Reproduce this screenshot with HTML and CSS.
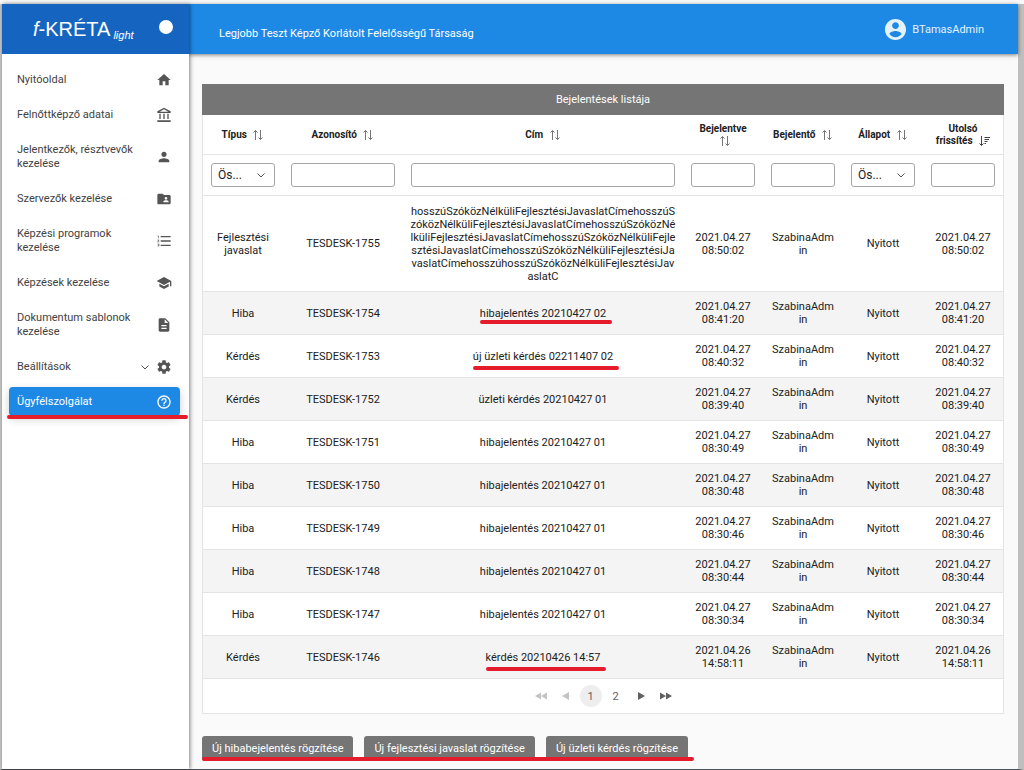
FILE: index.html
```html
<!DOCTYPE html>
<html lang="hu">
<head>
    <meta charset="UTF-8">
    <meta name="viewport" content="width=device-width, initial-scale=1.0">
    <title>f-KRÉTA light - Ügyfélszolgálat</title>
    <link rel="stylesheet" href="styles.css">
</head>
<body>
    <svg class="sprite" aria-hidden="true">
        <symbol id="sort" viewBox="0 0 12 12">
            <path d="M3.500 11V1.500M1.500 3.500l2-2 2 2M8.500 1v9.500M6.500 8.500l2 2 2-2" fill="none" stroke="currentColor"/>
        </symbol>
        <symbol id="sort-down" viewBox="0 0 12 12">
            <path d="M3.500 1v9.500M1.500 8.500l2 2 2-2M6.500 2.500H12M6.500 4.500H11M6.500 6.500h3M6.500 8.500h1.500" fill="none" stroke="currentColor"/>
        </symbol>
    </svg>

    <div class="app">
        <aside class="sidebar">
            <div class="brand">
                <div class="logo"><span><i>f</i>-KRÉTA</span><em>light</em></div>
                <span class="dot"></span>
            </div>
            <nav class="menu">
                <a href="#">
                    <span>Nyitóoldal</span>
                    <svg viewBox="0 0 24 24"><path d="M10 20v-6h4v6h5v-8h3L12 3 2 12h3v8z"/></svg>
                </a>
                <a href="#">
                    <span>Felnőttképző adatai</span>
                    <svg viewBox="0 0 24 24"><path d="M5 10h2v8H5zM11 10h2v8h-2zM17 10h2v8h-2zM2 20h20v2.500H2zM12 1L2 6.500V9h20V6.500zM12 3.300L18.500 7h-13z" fill-rule="evenodd"/></svg>
                </a>
                <a href="#">
                    <span>Jelentkezők, résztvevők kezelése</span>
                    <svg viewBox="0 0 24 24"><path d="M12 12c2.210 0 4-1.790 4-4s-1.790-4-4-4-4 1.790-4 4 1.790 4 4 4zm0 2c-2.670 0-8 1.340-8 4v2h16v-2c0-2.660-5.330-4-8-4z"/></svg>
                </a>
                <a href="#">
                    <span>Szervezők kezelése</span>
                    <svg viewBox="0 0 24 24"><path d="M20 6h-8l-2-2H4C2.900 4 2 4.900 2 6v12c0 1.100.9 2 2 2h16c1.100 0 2-.9 2-2V8c0-1.100-.9-2-2-2zm-5 3c1.100 0 2 .9 2 2s-.9 2-2 2-2-.9-2-2 .9-2 2-2zm4 8h-8v-1c0-1.330 2.670-2 4-2s4 .67 4 2v1z"/></svg>
                </a>
                <a href="#">
                    <span>Képzési programok kezelése</span>
                    <svg viewBox="0 0 24 24"><path d="M2 17h2v.5H3v1h1v.5H2v1h3v-4H2zM3 8h1V4H2v1h1zM2 11h1.800L2 13.100v.9h3v-1H3.200L5 10.900V10H2zM7 4.500v2h15v-2zM7 19.500h15v-2H7zM7 13h15v-2H7z"/></svg>
                </a>
                <a href="#">
                    <span>Képzések kezelése</span>
                    <svg viewBox="0 0 24 24"><path d="M5 13.180v4L12 21l7-3.820v-4L12 17zM12 3L1 9l11 6 9-4.910V17h2V9z"/></svg>
                </a>
                <a href="#">
                    <span>Dokumentum sablonok kezelése</span>
                    <svg viewBox="0 0 24 24"><path d="M14 2H6c-1.100 0-2 .9-2 2v16c0 1.100.9 2 2 2h12c1.100 0 2-.9 2-2V8zm2 16H8v-2h8zm0-4H8v-2h8zm-3-5V3.500L18.500 9z"/></svg>
                </a>
                <a href="#">
                    <span>Beállítások</span>
                    <svg class="chevron" viewBox="0 0 10 10"><path d="M1.500 3.500L5 7l3.500-3.500"/></svg>
                    <svg viewBox="0 0 24 24"><path d="M19.430 12.980c.04-.32.07-.64.07-.98s-.03-.66-.07-.98l2.110-1.650c.19-.15.24-.42.12-.64l-2-3.460c-.12-.22-.39-.3-.61-.22l-2.490 1c-.52-.4-1.080-.73-1.690-.98l-.38-2.650C14.460 2.180 14.250 2 14 2h-4c-.25 0-.46.18-.49.42l-.38 2.650c-.61.25-1.170.59-1.690.98l-2.490-1c-.23-.09-.49 0-.61.22l-2 3.460c-.13.22-.07.49.12.64l2.110 1.650c-.04.32-.07.65-.07.98s.03.66.07.98l-2.110 1.650c-.19.15-.24.42-.12.64l2 3.460c.12.22.39.3.61.22l2.490-1c.52.4 1.080.73 1.690.98l.38 2.650c.03.24.24.42.49.42h4c.25 0 .46-.18.49-.42l.38-2.650c.61-.25 1.170-.59 1.690-.98l2.490 1c.23.09.49 0 .61-.22l2-3.460c.12-.22.07-.49-.12-.64zM12 15.500c-1.930 0-3.500-1.570-3.500-3.500s1.570-3.500 3.500-3.500 3.500 1.570 3.500 3.500-1.570 3.500-3.500 3.500z"/></svg>
                </a>
                <a href="#" class="active mark">
                    <span>Ügyfélszolgálat</span>
                    <svg viewBox="0 0 24 24"><path d="M11 18h2v-2h-2zM12 2C6.480 2 2 6.480 2 12s4.480 10 10 10 10-4.480 10-10S17.520 2 12 2zm0 18c-4.410 0-8-3.590-8-8s3.590-8 8-8 8 3.590 8 8-3.590 8-8 8zm0-14c-2.210 0-4 1.790-4 4h2c0-1.100.9-2 2-2s2 .9 2 2c0 2-3 1.750-3 5h2c0-2.250 3-2.500 3-5 0-2.210-1.790-4-4-4z"/></svg>
                </a>
            </nav>
        </aside>

        <div class="page">
            <header class="topbar">
                <span>Legjobb Teszt Képző Korlátolt Felelősségű Társaság</span>
                <a href="#" class="user">
                    <svg viewBox="0 0 24 24"><path d="M12 1C5.900 1 1 5.900 1 12s4.900 11 11 11 11-4.900 11-11S18.100 1 12 1zm0 3.500c1.900 0 3.500 1.600 3.500 3.500s-1.600 3.500-3.500 3.500S8.500 9.900 8.500 8s1.600-3.500 3.500-3.500zM12 20c-2.700 0-5-1.300-6.300-3.300.1-2 4.200-3.100 6.300-3.100s6.200 1.100 6.300 3.100C17 18.700 14.700 20 12 20z"/></svg>
                    <span>BTamasAdmin</span>
                </a>
            </header>

            <main class="content">
                <section class="panel">
                    <h1>Bejelentések listája</h1>
                    <table>
                        <colgroup>
                            <col class="narrow"><col class="medium"><col class="wide">
                            <col class="narrow"><col class="narrow"><col class="narrow"><col class="narrow">
                        </colgroup>
                        <thead>
                            <tr>
                                <th>Típus <svg><use href="#sort"/></svg></th>
                                <th>Azonosító <svg><use href="#sort"/></svg></th>
                                <th>Cím <svg><use href="#sort"/></svg></th>
                                <th>Bejelentve <svg><use href="#sort"/></svg></th>
                                <th>Bejelentő <svg><use href="#sort"/></svg></th>
                                <th>Állapot <svg><use href="#sort"/></svg></th>
                                <th>Utolsó frissítés <svg class="sorted"><use href="#sort-down"/></svg></th>
                            </tr>
                            <tr class="filters">
                                <td><select aria-label="Típus"><option>Ös...</option></select></td>
                                <td><input type="text" aria-label="Azonosító"></td>
                                <td><input type="text" aria-label="Cím"></td>
                                <td><input type="text" aria-label="Bejelentve"></td>
                                <td><input type="text" aria-label="Bejelentő"></td>
                                <td><select aria-label="Állapot"><option>Ös...</option></select></td>
                                <td><input type="text" aria-label="Utolsó frissítés"></td>
                            </tr>
                        </thead>
                        <tbody>
                            <tr>
                                <td>Fejlesztési javaslat</td>
                                <td>TESDESK-1755</td>
                                <td class="break">hosszúSzóközNélküliFejlesztésiJavaslatCímehosszúSzóközNélküliFejlesztésiJavaslatCímehosszúSzóközNélküliFejlesztésiJavaslatCímehosszúSzóközNélküliFejlesztésiJavaslatCímehosszúSzóközNélküliFejlesztésiJavaslatCímehosszúhosszúSzóközNélküliFejlesztésiJavaslatC</td>
                                <td>2021.04.27 08:50:02</td>
                                <td>SzabinaAdmin</td>
                                <td>Nyitott</td>
                                <td>2021.04.27 08:50:02</td>
                            </tr>
                            <tr>
                                <td>Hiba</td>
                                <td>TESDESK-1754</td>
                                <td><span class="mark">hibajelentés 20210427 02</span></td>
                                <td>2021.04.27 08:41:20</td>
                                <td>SzabinaAdmin</td>
                                <td>Nyitott</td>
                                <td>2021.04.27 08:41:20</td>
                            </tr>
                            <tr>
                                <td>Kérdés</td>
                                <td>TESDESK-1753</td>
                                <td><span class="mark low">új üzleti kérdés 02211407 02</span></td>
                                <td>2021.04.27 08:40:32</td>
                                <td>SzabinaAdmin</td>
                                <td>Nyitott</td>
                                <td>2021.04.27 08:40:32</td>
                            </tr>
                            <tr>
                                <td>Kérdés</td>
                                <td>TESDESK-1752</td>
                                <td>üzleti kérdés 20210427 01</td>
                                <td>2021.04.27 08:39:40</td>
                                <td>SzabinaAdmin</td>
                                <td>Nyitott</td>
                                <td>2021.04.27 08:39:40</td>
                            </tr>
                            <tr>
                                <td>Hiba</td>
                                <td>TESDESK-1751</td>
                                <td>hibajelentés 20210427 01</td>
                                <td>2021.04.27 08:30:49</td>
                                <td>SzabinaAdmin</td>
                                <td>Nyitott</td>
                                <td>2021.04.27 08:30:49</td>
                            </tr>
                            <tr>
                                <td>Hiba</td>
                                <td>TESDESK-1750</td>
                                <td>hibajelentés 20210427 01</td>
                                <td>2021.04.27 08:30:48</td>
                                <td>SzabinaAdmin</td>
                                <td>Nyitott</td>
                                <td>2021.04.27 08:30:48</td>
                            </tr>
                            <tr>
                                <td>Hiba</td>
                                <td>TESDESK-1749</td>
                                <td>hibajelentés 20210427 01</td>
                                <td>2021.04.27 08:30:46</td>
                                <td>SzabinaAdmin</td>
                                <td>Nyitott</td>
                                <td>2021.04.27 08:30:46</td>
                            </tr>
                            <tr>
                                <td>Hiba</td>
                                <td>TESDESK-1748</td>
                                <td>hibajelentés 20210427 01</td>
                                <td>2021.04.27 08:30:44</td>
                                <td>SzabinaAdmin</td>
                                <td>Nyitott</td>
                                <td>2021.04.27 08:30:44</td>
                            </tr>
                            <tr>
                                <td>Hiba</td>
                                <td>TESDESK-1747</td>
                                <td>hibajelentés 20210427 01</td>
                                <td>2021.04.27 08:30:34</td>
                                <td>SzabinaAdmin</td>
                                <td>Nyitott</td>
                                <td>2021.04.27 08:30:34</td>
                            </tr>
                            <tr>
                                <td>Kérdés</td>
                                <td>TESDESK-1746</td>
                                <td><span class="mark low">kérdés 20210426 14:57</span></td>
                                <td>2021.04.26 14:58:11</td>
                                <td>SzabinaAdmin</td>
                                <td>Nyitott</td>
                                <td>2021.04.26 14:58:11</td>
                            </tr>
                        </tbody>
                    </table>
                    <div class="paginator">
                        <button type="button" disabled aria-label="Első oldal"><svg viewBox="0 0 12 12"><path d="M6 2.500v7L0 6zM12 2.500v7L6 6z"/></svg></button>
                        <button type="button" disabled aria-label="Előző oldal"><svg viewBox="0 0 12 12"><path d="M9 2v8L2 6z"/></svg></button>
                        <button type="button" class="current">1</button>
                        <button type="button">2</button>
                        <button type="button" aria-label="Következő oldal"><svg viewBox="0 0 12 12"><path d="M3 2v8l7-4z"/></svg></button>
                        <button type="button" aria-label="Utolsó oldal"><svg viewBox="0 0 12 12"><path d="M0 2.500v7L6 6zM6 2.500v7L12 6z"/></svg></button>
                    </div>
                </section>

                <div class="actions mark">
                    <button type="button">Új hibabejelentés rögzítése</button>
                    <button type="button">Új fejlesztési javaslat rögzítése</button>
                    <button type="button">Új üzleti kérdés rögzítése</button>
                </div>
            </main>
        </div>
    </div>
</body>
</html>
```
FILE: styles.css
```css
* {
    box-sizing: border-box;
}

body {
    margin: 0;
    padding-top: 4px;
    min-height: 100vh;
    display: flex;
    background: #f8f8f8;
    color: #212121;
    font-family: Roboto, "Liberation Sans", sans-serif;
    font-size: 11px;
    line-height: 13px;
}

button, input, select {
    font: inherit;
    color: inherit;
}

a {
    color: inherit;
    text-decoration: none;
}

.sprite {
    display: none;
}

.app {
    flex: 1;
    display: flex;
    background: #fafafa;
    border-left: 2px solid #c8c8c8;
    border-right: 6px solid #bfbfbf;
    border-bottom: 1px solid #4b5158;
}

/* Sidebar */
.sidebar {
    flex: 0 0 187px;
    background: white;
    box-shadow: 1px 0 4px rgba(0,0,0,0.5);
    z-index: 1;
}

.brand {
    height: 50px;
    padding: 0 16px 0 31px;
    display: flex;
    justify-content: space-between;
    align-items: center;
    background: #1565c0;
    color: white;
}

.logo {
    display: flex;
    align-items: flex-end;
    gap: 3px;
    font-family: "Liberation Sans", Arial, sans-serif;
    font-size: 20px;
    line-height: 24px;
    white-space: nowrap;
}

.logo em {
    font-size: 11px;
    line-height: 12px;
}

.dot {
    width: 14px;
    height: 14px;
    margin-bottom: 4px;
    border-radius: 50%;
    background: white;
}

.menu {
    display: flex;
    flex-direction: column;
    gap: 6px;
    padding: 11px 9px 0 7px;
}

.menu a {
    display: flex;
    align-items: center;
    padding: 8px 8px 7px;
    border-radius: 4px;
    line-height: 14px;
    color: #424242;
}

.menu span {
    flex: 1;
    padding-right: 16px;
}

.menu svg {
    width: 16px;
    height: 16px;
    margin: -1px 0;
    fill: #555;
}

.menu .chevron {
    width: 10px;
    height: 10px;
    margin-right: 6px;
    fill: none;
    stroke: #555;
}

.menu .active {
    background: #1e88e5;
    color: white;
    box-shadow: 0 3px 8px rgba(0,0,0,0.2);
}

.menu .active svg {
    fill: white;
}

/* Top bar */
.page {
    flex: 1;
    min-width: 0;
}

.topbar {
    height: 50px;
    padding: 8px 34px 0 30px;
    display: flex;
    justify-content: space-between;
    align-items: center;
    background: #1e88e5;
    color: white;
    box-shadow: 0 1px 4px rgba(0,0,0,0.5);
}

.user {
    display: flex;
    align-items: center;
    gap: 5px;
    padding-bottom: 8px;
    color: #e3f2fd;
}

.user svg {
    width: 23px;
    height: 23px;
    fill: currentColor;
}

/* List */
.content {
    padding: 30px 14px 8px 13px;
}

.panel {
    background: white;
    border: 1px solid #e4e4e4;
    border-top: none;
}

h1 {
    margin: 0 -1px;
    padding: 9px;
    background: #757575;
    color: white;
    font-size: 11px;
    font-weight: 400;
    text-align: center;
}

table {
    width: 100%;
    table-layout: fixed;
    border-spacing: 0;
    text-align: center;
}

.narrow {
    width: 10%;
}

.medium {
    width: 15%;
}

.wide {
    width: 35%;
}

th, td {
    padding: 8px;
    border-bottom: 1px solid #e4e4e4;
    overflow-wrap: anywhere;
}

th {
    height: 40px;
    padding: 0 8px;
    font-size: 10px;
    line-height: 12px;
}

th svg {
    width: 12px;
    height: 12px;
    margin-left: 3px;
    vertical-align: -3px;
    color: #757575;
}

th .sorted {
    color: #424242;
}

td.break {
    height: 96px;
    padding: 8px 7px;
    word-break: break-all;
}

tbody tr:nth-child(even) {
    background: #f4f4f4;
}

input, select {
    display: block;
    width: 100%;
    height: 24px;
    padding: 0 6px;
    border: 1px solid #a6a6a6;
    border-radius: 3px;
    background: white;
}

select {
    appearance: none;
    font-size: 12px;
    line-height: 20px;
    background: white url("data:image/svg+xml,%3Csvg xmlns='http://www.w3.org/2000/svg' viewBox='0 0 10 10'%3E%3Cpath d='M1.500 3.500L5 7l3.500-3.500' fill='none' stroke='%23555'/%3E%3C/svg%3E") no-repeat right 8px center / 10px;
}

.paginator {
    display: flex;
    justify-content: center;
    gap: 3px;
    padding: 6px 0;
}

.paginator button {
    display: flex;
    align-items: center;
    justify-content: center;
    width: 22px;
    height: 22px;
    padding: 0;
    border: none;
    border-radius: 50%;
    background: none;
    color: #616161;
}

.paginator button:disabled {
    color: #c4c4c4;
}

.paginator .current {
    background: #eee;
}

.paginator svg {
    width: 12px;
    height: 12px;
    fill: currentColor;
}

.actions {
    display: flex;
    gap: 11px;
    width: fit-content;
    margin-top: 22px;
}

.actions button {
    height: 25px;
    padding: 0 10px;
    border: none;
    border-radius: 3px;
    background: #757575;
    color: white;
    font-size: 11px;
}

/* Red underline */
.mark {
    position: relative;
}

.mark::after {
    content: "";
    position: absolute;
    left: 0;
    right: -6px;
    bottom: -4px;
    height: 4px;
    border-radius: 2px;
    background: #e51c2c;
}

.mark.low::after {
    bottom: -7px;
}

.menu .mark::after {
    left: -2px;
    right: -8px;
    bottom: -3px;
}

.actions.mark::after {
    bottom: 0;
}
```
